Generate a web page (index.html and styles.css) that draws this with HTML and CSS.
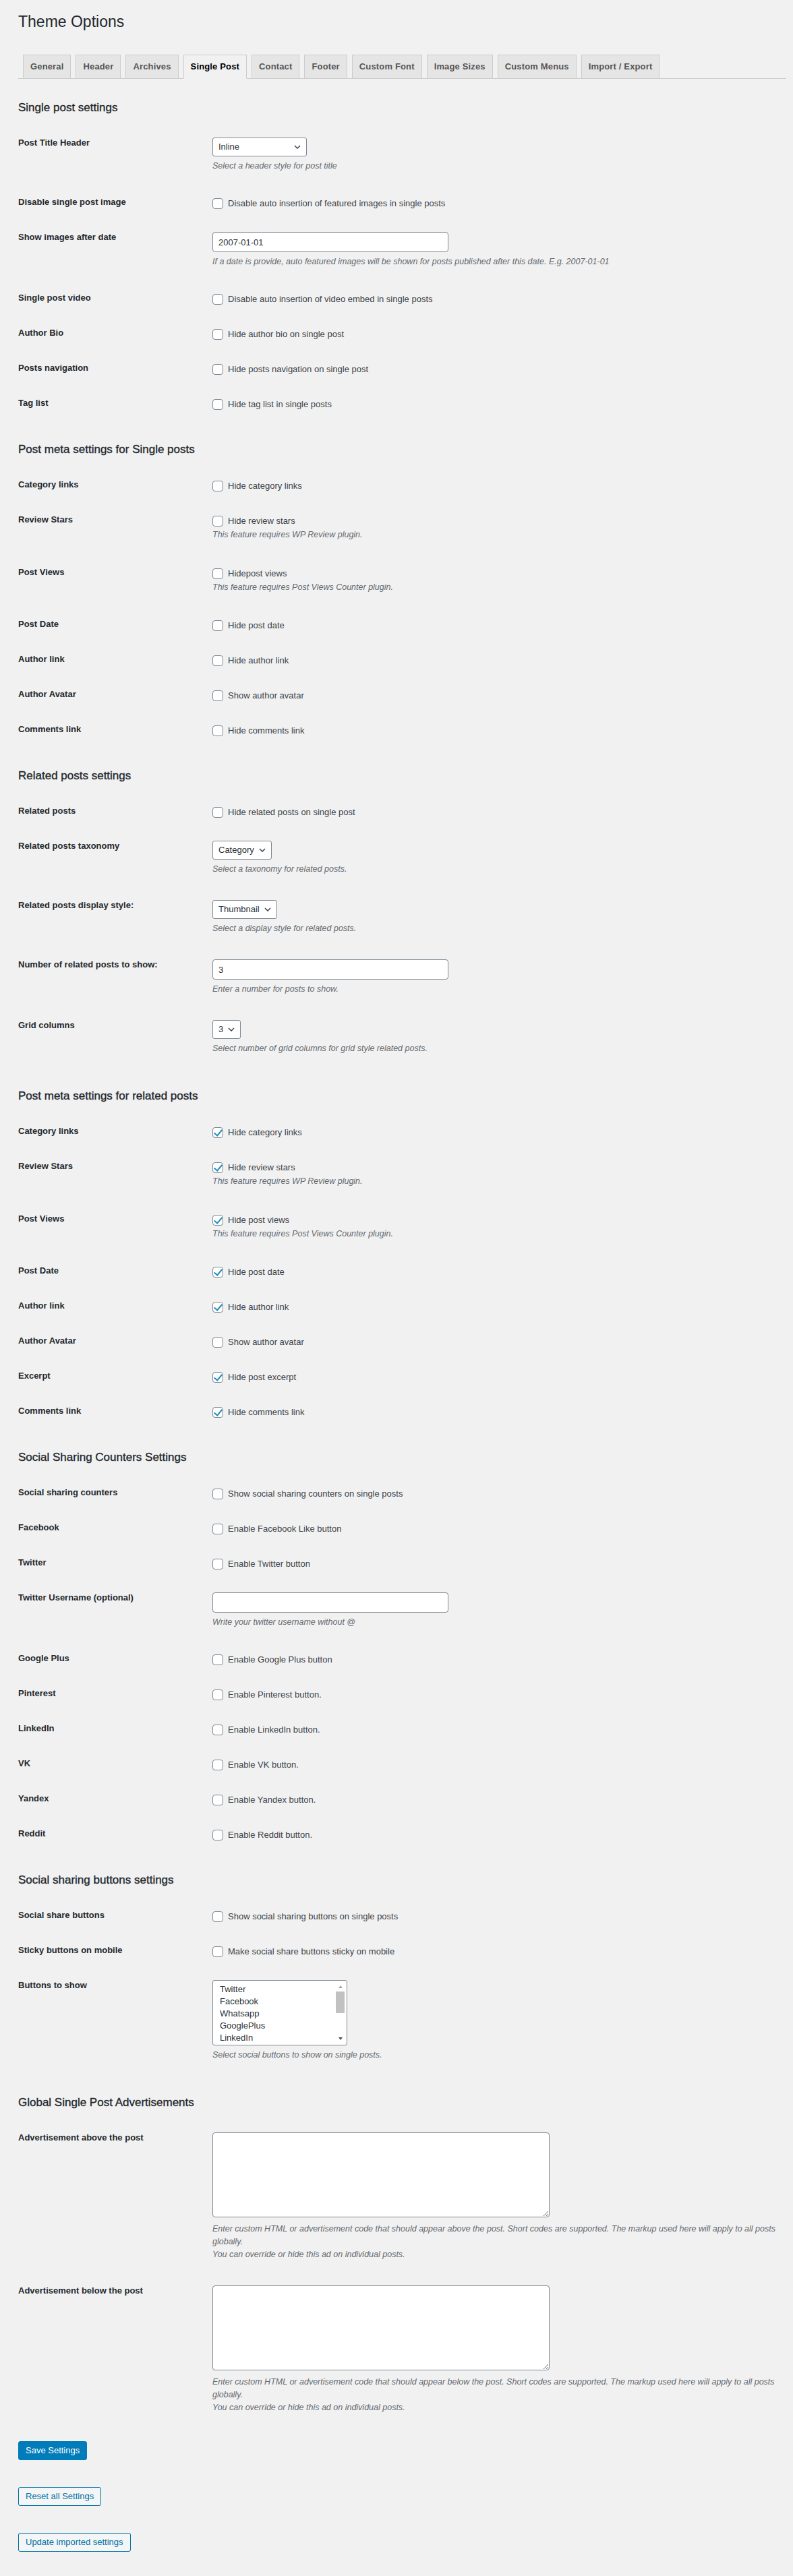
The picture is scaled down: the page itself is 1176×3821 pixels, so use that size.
FILE: index.html
```html
<!DOCTYPE html>
<html lang="en">
<head>
<meta charset="utf-8">
<title>Theme Options</title>
<link rel="stylesheet" href="styles.css">
</head>
<body>
<div class="wrap">
  <h1 class="title">Theme Options</h1>
  <nav class="tabs">
    <a class="tab">General</a>
    <a class="tab">Header</a>
    <a class="tab">Archives</a>
    <a class="tab active">Single Post</a>
    <a class="tab">Contact</a>
    <a class="tab">Footer</a>
    <a class="tab">Custom Font</a>
    <a class="tab">Image Sizes</a>
    <a class="tab">Custom Menus</a>
    <a class="tab">Import / Export</a>
  </nav>

  <form class="options">
    <h2>Single post settings</h2>
    <table class="form-table"><tbody>
      <tr><th>Post Title Header</th><td>
        <div class="select sel-wide"><span>Inline</span><svg class="chev" width="10" height="6" viewBox="0 0 10 6"><polyline points="1,1 5,5 9,1"/></svg></div>
        <p class="desc">Select a header style for post title</p></td></tr>
      <tr><th>Disable single post image</th><td><label class="cb"><input type="checkbox">Disable auto insertion of featured images in single posts</label></td></tr>
      <tr><th>Show images after date</th><td>
        <input class="text" type="text" value="2007-01-01">
        <p class="desc">If a date is provide, auto featured images will be shown for posts published after this date. E.g. 2007-01-01</p></td></tr>
      <tr><th>Single post video</th><td><label class="cb"><input type="checkbox">Disable auto insertion of video embed in single posts</label></td></tr>
      <tr><th>Author Bio</th><td><label class="cb"><input type="checkbox">Hide author bio on single post</label></td></tr>
      <tr><th>Posts navigation</th><td><label class="cb"><input type="checkbox">Hide posts navigation on single post</label></td></tr>
      <tr><th>Tag list</th><td><label class="cb"><input type="checkbox">Hide tag list in single posts</label></td></tr>
    </tbody></table>

    <h2>Post meta settings for Single posts</h2>
    <table class="form-table"><tbody>
      <tr><th>Category links</th><td><label class="cb"><input type="checkbox">Hide category links</label></td></tr>
      <tr><th>Review Stars</th><td><label class="cb"><input type="checkbox">Hide review stars</label><p class="desc cb-desc">This feature requires WP Review plugin.</p></td></tr>
      <tr><th>Post Views</th><td><label class="cb"><input type="checkbox">Hidepost views</label><p class="desc cb-desc">This feature requires Post Views Counter plugin.</p></td></tr>
      <tr><th>Post Date</th><td><label class="cb"><input type="checkbox">Hide post date</label></td></tr>
      <tr><th>Author link</th><td><label class="cb"><input type="checkbox">Hide author link</label></td></tr>
      <tr><th>Author Avatar</th><td><label class="cb"><input type="checkbox">Show author avatar</label></td></tr>
      <tr><th>Comments link</th><td><label class="cb"><input type="checkbox">Hide comments link</label></td></tr>
    </tbody></table>

    <h2>Related posts settings</h2>
    <table class="form-table"><tbody>
      <tr><th>Related posts</th><td><label class="cb"><input type="checkbox">Hide related posts on single post</label></td></tr>
      <tr><th>Related posts taxonomy</th><td>
        <div class="select"><span>Category</span><svg class="chev" width="10" height="6" viewBox="0 0 10 6"><polyline points="1,1 5,5 9,1"/></svg></div>
        <p class="desc">Select a taxonomy for related posts.</p></td></tr>
      <tr><th>Related posts display style:</th><td>
        <div class="select"><span>Thumbnail</span><svg class="chev" width="10" height="6" viewBox="0 0 10 6"><polyline points="1,1 5,5 9,1"/></svg></div>
        <p class="desc">Select a display style for related posts.</p></td></tr>
      <tr><th>Number of related posts to show:</th><td>
        <input class="text" type="text" value="3">
        <p class="desc">Enter a number for posts to show.</p></td></tr>
      <tr><th>Grid columns</th><td>
        <div class="select"><span>3</span><svg class="chev" width="10" height="6" viewBox="0 0 10 6"><polyline points="1,1 5,5 9,1"/></svg></div>
        <p class="desc">Select number of grid columns for grid style related posts.</p></td></tr>
    </tbody></table>

    <h2>Post meta settings for related posts</h2>
    <table class="form-table"><tbody>
      <tr><th>Category links</th><td><label class="cb"><input type="checkbox" checked>Hide category links</label></td></tr>
      <tr><th>Review Stars</th><td><label class="cb"><input type="checkbox" checked>Hide review stars</label><p class="desc cb-desc">This feature requires WP Review plugin.</p></td></tr>
      <tr><th>Post Views</th><td><label class="cb"><input type="checkbox" checked>Hide post views</label><p class="desc cb-desc">This feature requires Post Views Counter plugin.</p></td></tr>
      <tr><th>Post Date</th><td><label class="cb"><input type="checkbox" checked>Hide post date</label></td></tr>
      <tr><th>Author link</th><td><label class="cb"><input type="checkbox" checked>Hide author link</label></td></tr>
      <tr><th>Author Avatar</th><td><label class="cb"><input type="checkbox">Show author avatar</label></td></tr>
      <tr><th>Excerpt</th><td><label class="cb"><input type="checkbox" checked>Hide post excerpt</label></td></tr>
      <tr><th>Comments link</th><td><label class="cb"><input type="checkbox" checked>Hide comments link</label></td></tr>
    </tbody></table>

    <h2>Social Sharing Counters Settings</h2>
    <table class="form-table"><tbody>
      <tr><th>Social sharing counters</th><td><label class="cb"><input type="checkbox">Show social sharing counters on single posts</label></td></tr>
      <tr><th>Facebook</th><td><label class="cb"><input type="checkbox">Enable Facebook Like button</label></td></tr>
      <tr><th>Twitter</th><td><label class="cb"><input type="checkbox">Enable Twitter button</label></td></tr>
      <tr><th>Twitter Username (optional)</th><td>
        <input class="text" type="text" value="">
        <p class="desc">Write your twitter username without @</p></td></tr>
      <tr><th>Google Plus</th><td><label class="cb"><input type="checkbox">Enable Google Plus button</label></td></tr>
      <tr><th>Pinterest</th><td><label class="cb"><input type="checkbox">Enable Pinterest button.</label></td></tr>
      <tr><th>LinkedIn</th><td><label class="cb"><input type="checkbox">Enable LinkedIn button.</label></td></tr>
      <tr><th>VK</th><td><label class="cb"><input type="checkbox">Enable VK button.</label></td></tr>
      <tr><th>Yandex</th><td><label class="cb"><input type="checkbox">Enable Yandex button.</label></td></tr>
      <tr><th>Reddit</th><td><label class="cb"><input type="checkbox">Enable Reddit button.</label></td></tr>
    </tbody></table>

    <h2>Social sharing buttons settings</h2>
    <table class="form-table"><tbody>
      <tr><th>Social share buttons</th><td><label class="cb"><input type="checkbox">Show social sharing buttons on single posts</label></td></tr>
      <tr><th>Sticky buttons on mobile</th><td><label class="cb"><input type="checkbox">Make social share buttons sticky on mobile</label></td></tr>
      <tr><th>Buttons to show</th><td>
        <div class="listbox">
          <ul class="list">
            <li>Twitter</li>
            <li>Facebook</li>
            <li>Whatsapp</li>
            <li>GooglePlus</li>
            <li>LinkedIn</li>
          </ul>
          <div class="scrollbar">
            <span class="arrow up"></span>
            <span class="thumb"></span>
            <span class="arrow down"></span>
          </div>
        </div>
        <p class="desc">Select social buttons to show on single posts.</p></td></tr>
    </tbody></table>

    <h2>Global Single Post Advertisements</h2>
    <table class="form-table"><tbody>
      <tr><th>Advertisement above the post</th><td>
        <textarea class="area"></textarea>
        <p class="desc ad-desc">Enter custom HTML or advertisement code that should appear above the post. Short codes are supported. The markup used here will apply to all posts globally.<br>You can override or hide this ad on individual posts.</p></td></tr>
      <tr><th>Advertisement below the post</th><td>
        <textarea class="area"></textarea>
        <p class="desc ad-desc">Enter custom HTML or advertisement code that should appear below the post. Short codes are supported. The markup used here will apply to all posts globally.<br>You can override or hide this ad on individual posts.</p></td></tr>
    </tbody></table>

    <div class="actions">
      <button type="button" class="btn primary">Save Settings</button>
      <button type="button" class="btn">Reset all Settings</button>
      <button type="button" class="btn">Update imported settings</button>
    </div>
  </form>
</div>
</body>
</html>
```

FILE: styles.css
```css
* { box-sizing: border-box; }

html, body {
  margin: 0;
  padding: 0;
  background: #f1f1f1;
}

body {
  font-family: "Liberation Sans", Arial, sans-serif;
  font-size: 13px;
  line-height: 1.4;
  color: #3c434a;
}

.wrap {
  margin: 0 10px 0 27px;
}

.title {
  margin: 0;
  padding-top: 17px;
  font-size: 23px;
  font-weight: 400;
  line-height: 30px;
  color: #23282d;
}

.tabs {
  display: flex;
  margin-top: 34px;
  border-bottom: 1px solid #ccc;
}

.tab {
  display: block;
  margin-left: 7px;
  margin-bottom: -1px;
  padding: 5px 10px;
  border: 1px solid #ccc;
  background: #e5e5e5;
  color: #555;
  font-size: 13px;
  font-weight: 700;
  letter-spacing: 0.15px;
  line-height: 24px;
  white-space: nowrap;
}

.tab.active {
  background: #f1f1f1;
  border-bottom-color: #f1f1f1;
  color: #000;
}

.options {
  padding-top: 2px;
}

.options h2 {
  margin: 28.5px 0 17.5px;
  font-size: 17px;
  font-weight: 400;
  line-height: 23px;
  color: #23282d;
  -webkit-text-stroke: 0.35px #23282d;
}

.form-table {
  width: 100%;
  border-collapse: collapse;
  border-spacing: 0;
}

.form-table th {
  width: 278px;
  padding: 15px 10px 15px 0;
  text-align: left;
  vertical-align: top;
  font-size: 13px;
  font-weight: 700;
  line-height: 18px;
  color: #23282d;
}

.form-table td {
  padding: 16px 10px;
  vertical-align: top;
  line-height: 20px;
}

.cb {
  display: flex;
  align-items: center;
  gap: 7px;
  height: 20px;
  line-height: 20px;
  color: #3c434a;
}

.cb input {
  -webkit-appearance: none;
  appearance: none;
  position: relative;
  flex: none;
  width: 16px;
  height: 16px;
  margin: 0;
  border: 1px solid #7e8993;
  border-radius: 4px;
  background: #fff;
}

.cb input:checked::before {
  content: "";
  position: absolute;
  left: 4px;
  top: 0px;
  width: 5px;
  height: 10px;
  border: solid #1e8cbe;
  border-width: 0 2.5px 2.5px 0;
  transform: rotate(40deg);
}

.desc {
  margin: 4px 0 4px;
  font-size: 12.5px;
  font-style: italic;
  line-height: 20px;
  color: #646970;
}

.desc.cb-desc {
  margin: 0 0 5.5px;
}

.desc.ad-desc {
  margin: 8px 0 4px;
  line-height: 19px;
}

.text {
  display: block;
  width: 350px;
  height: 30px;
  margin: 0;
  padding: 0 8px;
  border: 1px solid #7e8993;
  border-radius: 4px;
  background: #fff;
  font-family: inherit;
  font-size: 13px;
  color: #2c3338;
}

.select {
  display: flex;
  align-items: center;
  justify-content: space-between;
  gap: 7px;
  width: max-content;
  height: 28px;
  padding: 0 8px;
  border: 1px solid #7e8993;
  border-radius: 3px;
  background: #fff;
  color: #2c3338;
  font-size: 13px;
}

.select.sel-wide {
  width: 140px;
}

.chev {
  flex: none;
}

.chev polyline {
  fill: none;
  stroke: #3c434a;
  stroke-width: 1.5;
}

.listbox {
  display: flex;
  width: 200px;
  height: 97px;
  border: 1px solid #7e8993;
  border-radius: 3px;
  background: #fff;
  overflow: hidden;
}

.list {
  flex: 1;
  margin: 0;
  padding: 4px 0 0 10px;
  list-style: none;
  font-size: 13px;
  line-height: 18px;
  color: #2c3338;
}

.scrollbar {
  display: flex;
  flex-direction: column;
  align-items: center;
  width: 15px;
  margin: 1px 2px 1px 0;
}

.arrow {
  display: block;
  width: 0;
  height: 0;
  border-left: 3.5px solid transparent;
  border-right: 3.5px solid transparent;
}

.arrow.up {
  margin: 6px 0 5px;
  border-bottom: 4px solid #a3a3a3;
}

.arrow.down {
  margin: auto 0 6px;
  border-top: 4px solid #505050;
}

.thumb {
  display: block;
  width: 13px;
  height: 32px;
  background: #c1c1c1;
}

.area {
  display: block;
  width: 500px;
  height: 126px;
  margin: 0;
  padding: 4px 8px;
  border: 1px solid #7e8993;
  border-radius: 4px;
  background: #fff;
  font-family: inherit;
  font-size: 13px;
}

.actions {
  display: flex;
  flex-direction: column;
  align-items: flex-start;
  gap: 40px;
  margin-top: 20px;
  padding-bottom: 36px;
}

.btn {
  display: inline-block;
  height: 28px;
  margin: 0;
  padding: 0 10px;
  border: 1px solid #0071a1;
  border-radius: 3px;
  background: #f3f5f6;
  color: #0071a1;
  font-family: inherit;
  font-size: 13px;
  line-height: 26px;
  cursor: pointer;
}

.btn.primary {
  background: #007cba;
  border-color: #007cba;
  color: #fff;
}
```
